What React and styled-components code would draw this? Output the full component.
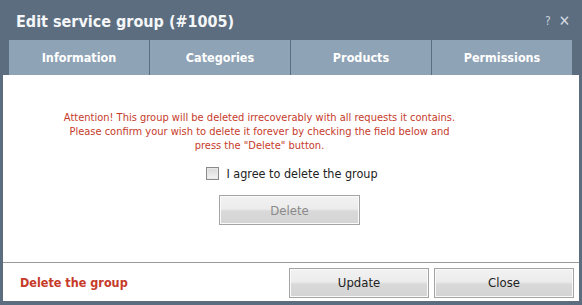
import React from "react";
import styled, { createGlobalStyle } from "styled-components";

const Global = createGlobalStyle`
  html, body { margin: 0; padding: 0; background: #5b6d7f; }
  body { font-family: "DejaVu Sans Condensed", "Liberation Sans", sans-serif; }
`;

const Window = styled.div`
  width: 582px;
  height: 305px;
  box-sizing: border-box;
  background: #5b6d7f;
  padding: 0 3px 4px 3px;
  display: flex;
  flex-direction: column;
`;

const TitleBar = styled.div`
  height: 40px;
  flex: none;
  display: flex;
  align-items: center;
  justify-content: space-between;
  padding: 0 9px 0 13px;
`;

const Title = styled.div`
  color: #f4f6f8;
  font-size: 16px;
  font-weight: bold;
  margin-top: 2px;
`;

const Controls = styled.div`
  display: flex;
  align-items: center;
  gap: 8px;
  color: #c9d1d9;
  margin-top: 2px;
`;

const Help = styled.span`
  font-size: 12px;
`;

const CloseX = styled.span`
  font-size: 15px;
  font-weight: bold;
  color: #d4dae0;
`;

const Tabs = styled.div`
  flex: none;
  display: grid;
  grid-template-columns: repeat(4, 140px);
  gap: 1px;
  margin-left: 6px;
  width: 563px;
  height: 35px;
`;

const Tab = styled.div`
  background: #8fa3b6;
  color: #ffffff;
  font-size: 12.5px;
  font-weight: bold;
  display: flex;
  align-items: center;
  justify-content: center;
`;

const Panel = styled.div`
  flex: 1;
  background: #ffffff;
  display: flex;
  flex-direction: column;
`;

const Body = styled.div`
  flex: 1;
  display: flex;
  flex-direction: column;
  align-items: center;
  padding-top: 36px;
`;

const Warning = styled.div`
  color: #c63a2a;
  font-size: 11px;
  line-height: 14px;
  text-align: center;
  margin-right: 63px;
`;

const AgreeRow = styled.label`
  display: flex;
  align-items: center;
  gap: 7px;
  margin-top: 13px;
  font-size: 12.5px;
  color: #222;
  margin-left: 2px;
`;

const Check = styled.span`
  width: 11px;
  height: 11px;
  border: 1px solid #8a8a8a;
  background: linear-gradient(#d8d8d8, #f4f4f4);
  box-shadow: inset 0 0 0 1px #e8e8e8;
`;

const Button = styled.button`
  width: ${(p) => p.$w || 140}px;
  height: 30px;
  box-sizing: border-box;
  border: 1px solid #a4a4a4;
  background: linear-gradient(#f2f2f2 0%, #ececec 45%, #d9d9d9 55%, #d4d4d4 100%);
  box-shadow: inset 0 0 0 1px #fafafa;
  font-family: inherit;
  font-size: 13px;
  color: ${(p) => (p.disabled ? "#8a8a8a" : "#222")};
  padding: 0;
`;

const DeleteButton = styled(Button)`
  margin-top: 14px;
  margin-left: -3px;
`;

const Footer = styled.div`
  flex: none;
  height: 38px;
  border-top: 1px solid #9a9a9a;
  display: flex;
  align-items: center;
  padding: 0 5px 0 17px;
`;

const DeleteLink = styled.span`
  color: #c63a2a;
  font-size: 12.5px;
  font-weight: bold;
  flex: 1;
`;

const Buttons = styled.div`
  display: flex;
  gap: 5px;
  margin-top: 1px;
`;

export default function App() {
  return (
    <>
      <Global />
      <Window>
        <TitleBar>
          <Title>Edit service group (#1005)</Title>
          <Controls>
            <Help>?</Help>
            <CloseX>✕</CloseX>
          </Controls>
        </TitleBar>
        <Tabs>
          <Tab>Information</Tab>
          <Tab>Categories</Tab>
          <Tab>Products</Tab>
          <Tab>Permissions</Tab>
        </Tabs>
        <Panel>
          <Body>
            <Warning>
              Attention! This group will be deleted irrecoverably with all requests it contains.
              <br />
              Please confirm your wish to delete it forever by checking the field below and
              <br />
              press the "Delete" button.
            </Warning>
            <AgreeRow>
              <Check />
              I agree to delete the group
            </AgreeRow>
            <DeleteButton $w={141} disabled>
              Delete
            </DeleteButton>
          </Body>
          <Footer>
            <DeleteLink>Delete the group</DeleteLink>
            <Buttons>
              <Button>Update</Button>
              <Button>Close</Button>
            </Buttons>
          </Footer>
        </Panel>
      </Window>
    </>
  );
}
